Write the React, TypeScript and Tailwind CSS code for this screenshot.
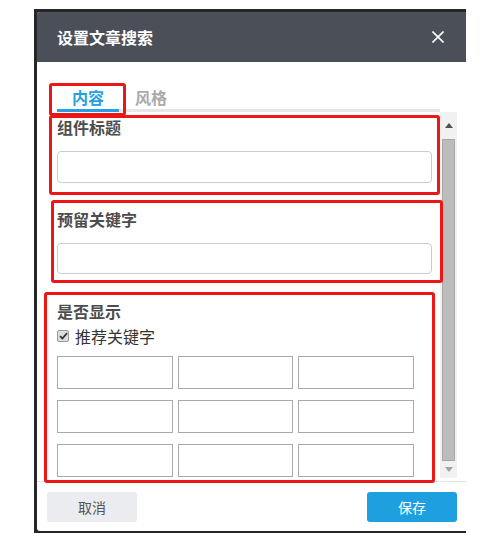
import React from "react";

const font = { fontFamily: '"Noto Sans CJK SC", "Noto Sans", sans-serif' };

function GridBox() {
  return <div className="h-[33px] border border-[#aaaaaa] bg-white" />;
}

export default function App() {
  const cells = Array.from({ length: 9 });
  return (
    <div className="relative w-[500px] h-[542px] bg-white overflow-hidden" style={font}>
      <div className="mt-[9px] ml-[34px] w-[432px] bg-[#262626] pl-[3px] pt-[3px] pb-[2px]">
        <div className="w-[429px] h-[519px] bg-white rounded-tl-[3px] rounded-bl-[3px] flex flex-col overflow-hidden">
          {/* header */}
          <div className="h-[50px] bg-[#4b5058] flex items-center justify-between pl-[20px] pr-[22px] shrink-0">
            <span className="text-white text-[16px] font-bold leading-[24px]">设置文章搜索</span>
            <svg width="12" height="12" viewBox="0 0 12 12" className="block">
              <path d="M0.5 0.5 L11.5 11.5 M11.5 0.5 L0.5 11.5" stroke="#ffffff" strokeWidth="1.6" fill="none" />
            </svg>
          </div>
          {/* body */}
          <div className="pl-[20px] pr-[9px] shrink-0">
            <div className="w-[383px] h-[50px] flex items-end border-b-[3px] border-[#e6e6e6]">
              <div className="w-[62px] text-center text-[16px] font-bold leading-[24px] text-[#25a0e2] border-b-[3px] border-[#25a0e2] -mb-[3px]">
                内容
              </div>
              <div className="w-[62px] ml-[1px] text-center text-[16px] font-bold leading-[24px] text-[#aaaaaa] pb-[3px] -mb-[3px]">
                风格
              </div>
            </div>
            <div className="h-[366px] flex">
              <div className="w-[383px] overflow-hidden">
                <div className="mt-[3px] text-[16px] font-bold leading-[24px] text-[#4d4d4d]">组件标题</div>
                <div className="mt-[12px] w-[375px] h-[32px] border border-[#cccccc] rounded-[4px]" />
                <div className="mt-[24px] text-[16px] font-bold leading-[24px] text-[#4d4d4d]">预留关键字</div>
                <div className="mt-[12px] w-[375px] h-[31px] border border-[#cccccc] rounded-[4px]" />
                <div className="mt-[25px] text-[16px] font-bold leading-[24px] text-[#4d4d4d]">是否显示</div>
                <div className="mt-[3px] h-[20px] flex items-center gap-[6px]">
                  <span className="w-[12px] h-[12px] border border-[#9a9a9a] rounded-[2px] bg-[#dddddd] flex items-center justify-center">
                    <svg width="9" height="8" viewBox="0 0 9 8">
                      <path d="M1 4.2 L3.4 6.5 L8 1.2" stroke="#333333" strokeWidth="1.8" fill="none" />
                    </svg>
                  </span>
                  <span className="text-[16px] leading-[20px] text-[#333333]">推荐关键字</span>
                </div>
                <div className="mt-[10px] w-[357px] grid grid-cols-3 gap-x-[5px] gap-y-[11px]">
                  {cells.map((_, i) => (
                    <GridBox key={i} />
                  ))}
                </div>
              </div>
              {/* scrollbar */}
              <div className="w-[17px] h-full bg-[#f1f1f1] flex flex-col items-center">
                <div className="h-[27px] w-full flex items-center justify-center">
                  <svg width="8" height="5" viewBox="0 0 8 5">
                    <path d="M0 5 L4 0 L8 5 Z" fill="#505050" />
                  </svg>
                </div>
                <div className="w-[13px] h-[322px] bg-[#bcbcbc] border border-[#a9a9a9]" />
                <div className="flex-1 w-full flex items-center justify-center">
                  <svg width="8" height="5" viewBox="0 0 8 5">
                    <path d="M0 0 L8 0 L4 5 Z" fill="#a3a3a3" />
                  </svg>
                </div>
              </div>
            </div>
          </div>
          {/* footer */}
          <div className="mt-[3px] border-t border-[#e5e5e5] pt-[10px] pl-[10px] pr-[9px] flex justify-between shrink-0">
            <button className="w-[90px] h-[30px] rounded-[3px] bg-[#ebecef] text-[14px] text-[#555555]">取消</button>
            <button className="w-[90px] h-[30px] rounded-[3px] bg-[#1e9fe0] text-[14px] text-white">保存</button>
          </div>
        </div>
      </div>

      {/* red annotation boxes */}
      <div className="absolute left-[49px] top-[83px] w-[77px] h-[33px] border-[3px] border-[#ee1515] rounded-[3px]" />
      <div className="absolute left-[49px] top-[115px] w-[391px] h-[80px] border-[3px] border-[#ee1515] rounded-[3px]" />
      <div className="absolute left-[51px] top-[200px] w-[392px] h-[83px] border-[3px] border-[#ee1515] rounded-[3px]" />
      <div className="absolute left-[44px] top-[292px] w-[391px] h-[191px] border-[3px] border-[#ee1515] rounded-[3px]" />
    </div>
  );
}
